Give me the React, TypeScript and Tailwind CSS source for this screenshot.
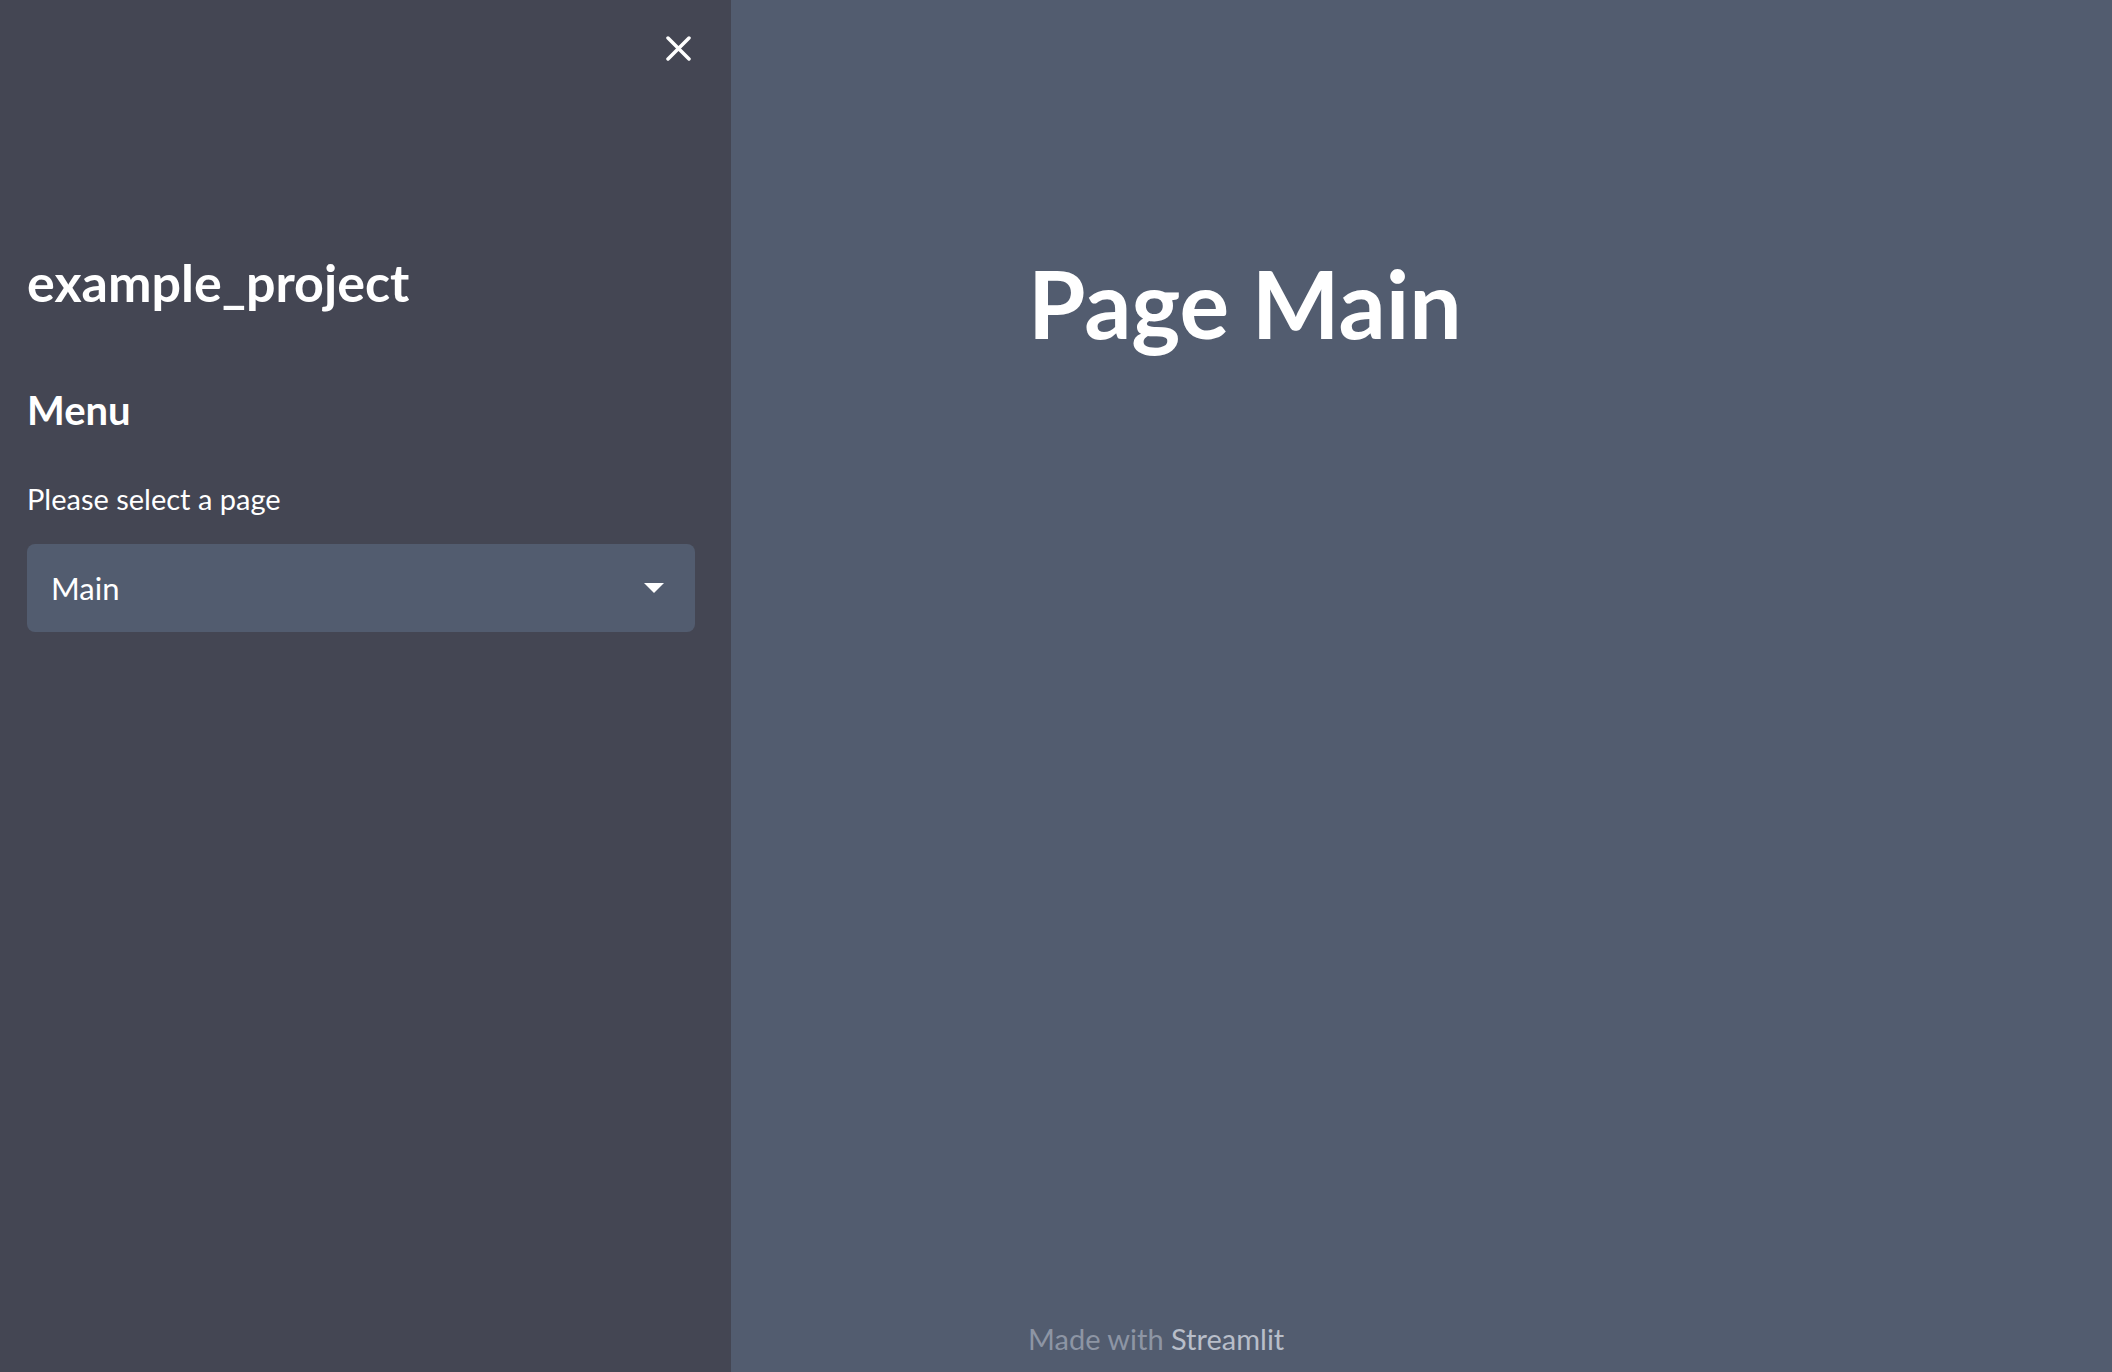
import React from "react";

export default function App() {
  const font = { fontFamily: "Lato, 'Noto Sans', sans-serif" };
  return (
    <div className="flex h-[1372px] w-[2112px] overflow-hidden text-white" style={font}>
      <aside className="flex h-full w-[731px] shrink-0 flex-col bg-[#444653] px-[27px]">
        <div className="flex h-[97px] items-start justify-end pt-[36px] pr-[13px]">
          <svg width="25" height="25" viewBox="0 0 25 25" fill="none" stroke="white" strokeWidth="3.5" strokeLinecap="round">
            <path d="M2 2 L23 23 M23 2 L2 23" />
          </svg>
        </div>
        <h1 className="mt-[157px] text-[52px] font-bold leading-[56px]">example_project</h1>
        <h2 className="mt-[76px] text-[40px] font-bold leading-[48px]">Menu</h2>
        <label className="mt-[47px] text-[29px] leading-[36px]">Please select a page</label>
        <div className="mt-[27px] flex h-[88px] w-[668px] items-center justify-between rounded-[8px] bg-[#525c6f] pl-[24px] pr-[31px]">
          <span className="text-[31px] leading-[36px]">Main</span>
          <svg width="20" height="10" viewBox="0 0 20 10">
            <path d="M0 0 L20 0 L10 10 Z" fill="white" />
          </svg>
        </div>
      </aside>
      <main className="flex h-full flex-1 flex-col bg-[#525c6f] pl-[297px]">
        <h1 className="mt-[250px] text-[93px] font-bold leading-[107px]">Page Main</h1>
        <div className="flex-1" />
        <footer className="pb-[15px] text-[29px] leading-[36px]">
          <span className="text-[#8d95a4]">Made with </span>
          <span className="text-[#b8bec9]">Streamlit</span>
        </footer>
      </main>
    </div>
  );
}
